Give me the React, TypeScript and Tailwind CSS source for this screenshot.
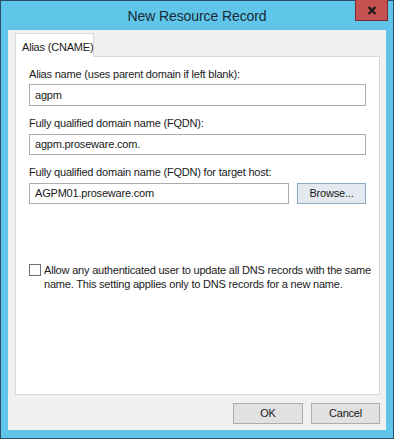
import React from "react";

const font = { fontFamily: '"Segoe UI", "Liberation Sans", Arial, sans-serif' };

export default function App() {
  return (
    <div className="w-[394px] h-[439px] bg-white" style={font}>
      <div className="w-[394px] h-[439px] border border-[#2a4f66] bg-[#5fc6ea] flex flex-col">
        {/* Title bar */}
        <div className="h-[29px] flex items-start relative">
          <div className="flex-1 text-center text-[14px] leading-[15px] pt-[8px] tracking-[-0.1px] text-[#1a2a33]">
            New Resource Record
          </div>
          <div className="absolute right-[5px] top-[-1px] w-[33px] h-[21px] bg-[#c75050] border border-[#7a2f2f] border-t-0 flex items-center justify-center">
            <svg width="10" height="9" viewBox="0 0 10 9">
              <path d="M1.5 1 L8.5 8 M8.5 1 L1.5 8" stroke="#1a1a1a" strokeWidth="2.2" />
            </svg>
          </div>
        </div>
        {/* Client */}
        <div className="mx-[7px] h-[400px] bg-[#f0f0f0] flex flex-col pl-[7px] pr-[6px] pt-[3px] text-[11px] tracking-[-0.2px] text-[#1a1a1a]">
          {/* Tab */}
          <div className="flex">
            <div className="w-[79px] h-[24px] bg-white border border-[#d9d9d9] border-b-0 whitespace-nowrap pl-[6px] pt-[5px] relative z-10 -mb-px">
              Alias (CNAME)
            </div>
          </div>
          {/* Panel */}
          <div className="h-[339px] bg-white border border-[#d9d9d9] px-[13px] pt-[10px] flex flex-col">
            <div className="leading-[14px] h-[17px]">Alias name (uses parent domain if left blank):</div>
            <div className="h-[22px] border border-[#acacac] bg-white pl-[5px] leading-[20px]">agpm</div>
            <div className="leading-[14px] h-[18px] mt-[10px]">Fully qualified domain name (FQDN):</div>
            <div className="h-[21px] border border-[#acacac] bg-white pl-[5px] leading-[19px]">agpm.proseware.com.</div>
            <div className="leading-[14px] h-[18px] mt-[10px]">Fully qualified domain name (FQDN) for target host:</div>
            <div className="flex gap-[8px]">
              <div className="flex-1 h-[21px] border border-[#acacac] bg-white pl-[5px] leading-[19px]">AGPM01.proseware.com</div>
              <div className="w-[69px] h-[21px] border border-[#8aaac4] bg-[#e3e9ef] text-center leading-[19px]">Browse...</div>
            </div>
            <div className="flex mt-[59px] gap-[3px]">
              <div className="w-[12px] h-[12px] border border-[#707070] bg-white mt-[1px] shrink-0" />
              <div className="leading-[14px] whitespace-nowrap">
                Allow any authenticated user to update all DNS records with the same
                <br />
                name. This setting applies only to DNS records for a new name.
              </div>
            </div>
          </div>
          {/* Buttons */}
          <div className="flex justify-end gap-[8px] mt-[8px]">
            <div className="w-[70px] h-[21px] border border-[#adadad] bg-[#e1e1e1] text-center leading-[19px]">OK</div>
            <div className="w-[69px] h-[21px] border border-[#adadad] bg-[#e1e1e1] text-center leading-[19px]">Cancel</div>
          </div>
        </div>
      </div>
    </div>
  );
}
